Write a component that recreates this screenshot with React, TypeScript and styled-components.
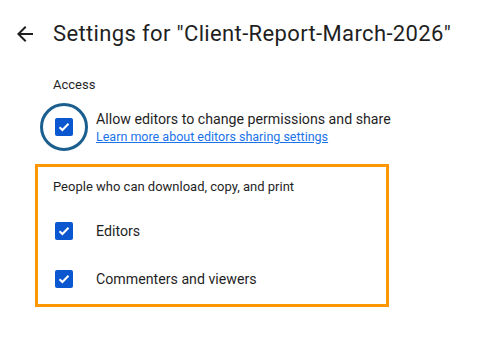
import * as React from 'react';
import styled, { createGlobalStyle } from 'styled-components';

const GlobalStyle = createGlobalStyle`
  body {
    margin: 0;
    background: #ffffff;
    font-family: Roboto, "Liberation Sans", Arial, sans-serif;
    color: #1f1f1f;
  }
`;

const Page = styled.div`
  width: 503px;
  height: 341px;
  overflow: hidden;
`;

const Header = styled.div`
  display: flex;
  align-items: center;
  padding: 20px 0 0 13px;
  height: 28px;
`;

const BackButton = styled.button`
  display: flex;
  align-items: center;
  justify-content: center;
  width: 24px;
  height: 24px;
  padding: 0;
  margin-right: 16px;
  border: none;
  background: none;
  color: #1f1f1f;
  cursor: pointer;
`;

const Title = styled.h1`
  margin: 0;
  font-size: 22px;
  line-height: 28px;
  font-weight: 400;
  letter-spacing: 0.36px;
  color: #1f1f1f;
  white-space: nowrap;
`;

const Section = styled.div`
  padding-left: 53px;
  margin-top: 26.5px;
`;

const SectionLabel = styled.div`
  font-size: 13px;
  line-height: 20px;
  font-weight: 400;
  color: #1f1f1f;
`;

const OptionRow = styled.label`
  display: flex;
  align-items: center;
  min-height: 48px;
  cursor: pointer;
`;

const AccessRow = styled(OptionRow)`
  margin-top: 8.5px;
`;

const BoxWrap = styled.div`
  position: relative;
  display: flex;
  align-items: center;
  justify-content: center;
  width: 18px;
  height: 18px;
  margin-left: 2px;
  margin-right: 23px;
  flex-shrink: 0;
`;

const Ring = styled.span`
  position: absolute;
  left: -15px;
  top: -15px;
  width: 42px;
  height: 42px;
  border: 3px solid #1b5f8f;
  border-radius: 50%;
  pointer-events: none;
`;

const Box = styled.span`
  display: flex;
  align-items: center;
  justify-content: center;
  width: 18px;
  height: 18px;
  border-radius: 2px;
  background: #0b57d0;
`;

const OptionText = styled.div`
  display: flex;
  flex-direction: column;
`;

const OptionLabel = styled.span`
  font-size: 14.2px;
  line-height: 20px;
  color: #1f1f1f;
`;

const HelpLink = styled.a`
  font-size: 12.5px;
  line-height: 16px;
  color: #1a73e8;
  text-decoration: underline;
`;

const Outline = styled.div`
  box-sizing: border-box;
  width: 354px;
  height: 143px;
  margin: 13px 0 0 35px;
  padding: 10px 0 0 15px;
  border: 3px solid #ff9800;
`;

const OutlineRows = styled.div`
  margin-top: 10px;
`;

const Check = () => (
  <svg width="12" height="10" viewBox="0 0 12 10" fill="none">
    <path d="M1.5 5.2 4.4 8 10.5 1.8" stroke="#fff" strokeWidth="2" />
  </svg>
);

const Checkbox = ({ ring }: { ring?: boolean }) => (
  <BoxWrap>
    {ring && <Ring />}
    <Box>
      <Check />
    </Box>
  </BoxWrap>
);

const App = () => {
  return (
    <Page>
      <GlobalStyle />
      <Header>
        <BackButton aria-label="Back">
          <svg width="24" height="24" viewBox="0 0 24 24">
            <path
              d="M20 11H7.83l5.59-5.59L12 4l-8 8 8 8 1.41-1.41L7.83 13H20v-2z"
              fill="currentColor"
            />
          </svg>
        </BackButton>
        <Title>Settings for "Client-Report-March-2026"</Title>
      </Header>

      <Section>
        <SectionLabel>Access</SectionLabel>
        <AccessRow>
          <Checkbox ring />
          <OptionText>
            <OptionLabel>Allow editors to change permissions and share</OptionLabel>
            <HelpLink href="#">Learn more about editors sharing settings</HelpLink>
          </OptionText>
        </AccessRow>
      </Section>

      <Outline>
        <SectionLabel>People who can download, copy, and print</SectionLabel>
        <OutlineRows>
          <OptionRow>
            <Checkbox />
            <OptionLabel>Editors</OptionLabel>
          </OptionRow>
          <OptionRow>
            <Checkbox />
            <OptionLabel>Commenters and viewers</OptionLabel>
          </OptionRow>
        </OutlineRows>
      </Outline>
    </Page>
  );
};

export default App;
